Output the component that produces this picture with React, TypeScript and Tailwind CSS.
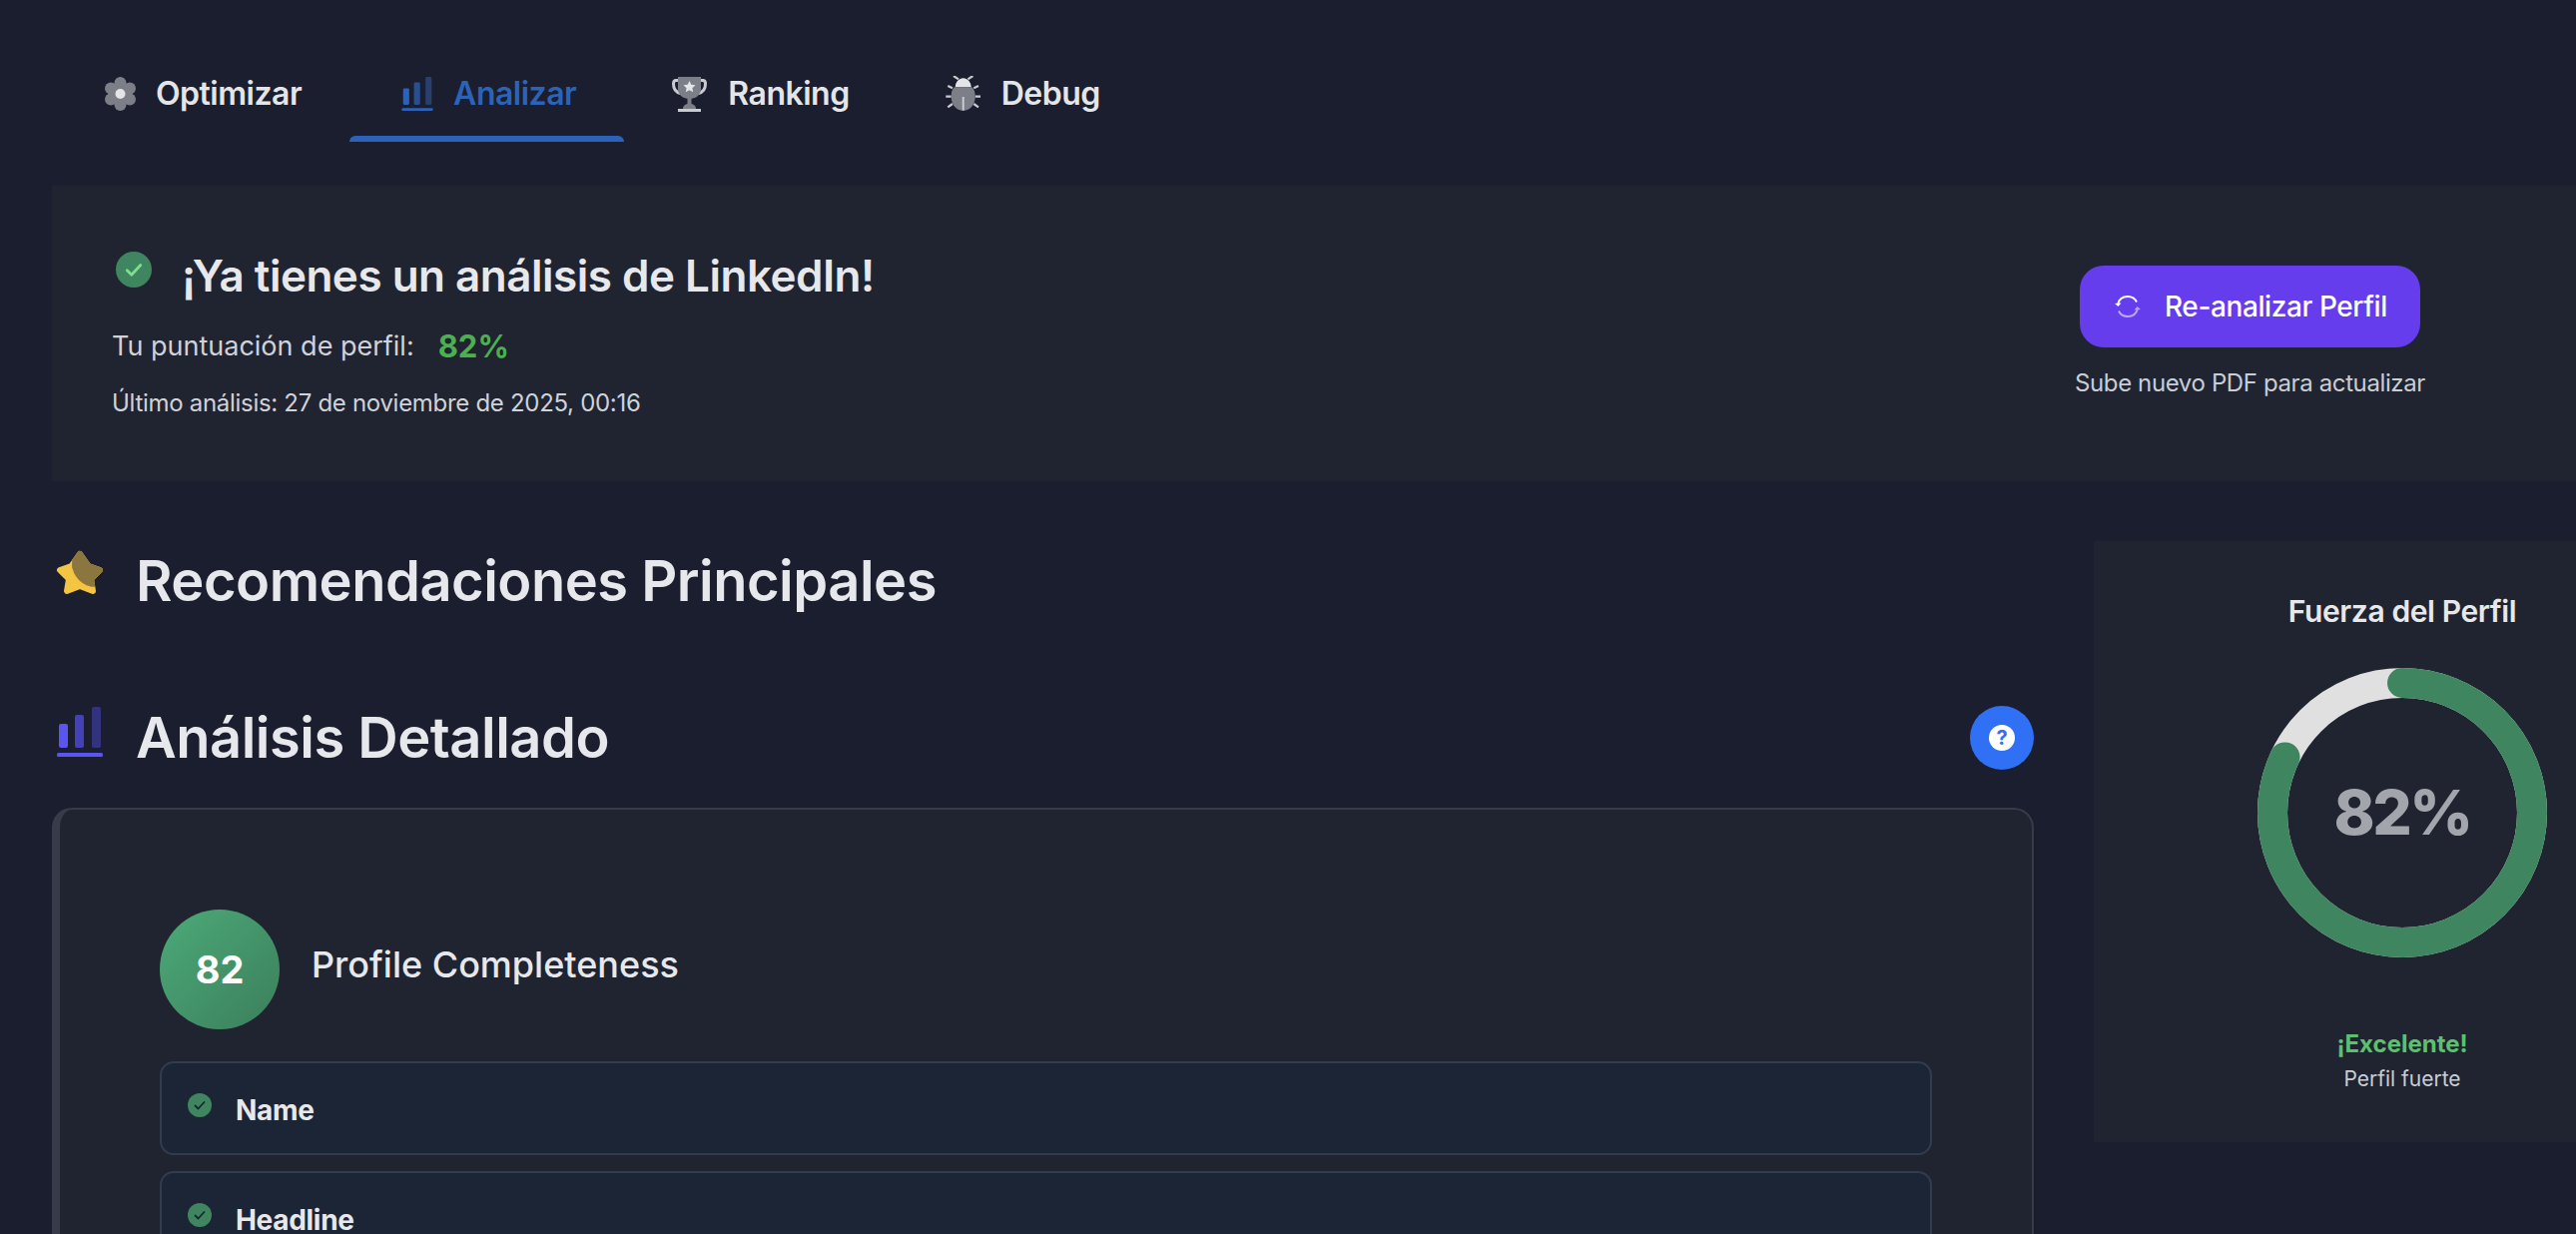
const GearIcon = () => (
  <svg width="36" height="36" viewBox="0 0 36 36">
    <g fill="#7d7f88">
      <circle cx="20.500" cy="18" r="12" />
      <circle cx="20.500" cy="7" r="6" />
      <circle cx="20.500" cy="29" r="6" />
      <circle cx="11" cy="12.500" r="6" />
      <circle cx="30" cy="12.500" r="6" />
      <circle cx="11" cy="23.500" r="6" />
      <circle cx="30" cy="23.500" r="6" />
    </g>
    <circle cx="20.500" cy="18" r="5" fill="#e4e5e9" />
  </svg>
);

const BarsIcon = ({ main, mid, dim }: { main: string; mid: string; dim: string }) => (
  <svg width="100%" height="100%" viewBox="0 0 46 50">
    <rect x="2" y="17" width="9" height="24" rx="2" fill={main} />
    <rect x="18" y="8" width="9" height="33" rx="2" fill={mid} />
    <rect x="35" y="0" width="9" height="41" rx="2" fill={dim} />
    <rect x="0" y="46" width="46" height="4" rx="1.500" fill={main} />
  </svg>
);

const TrophyIcon = () => (
  <svg width="36" height="36" viewBox="0 0 36 36">
    <path
      fill="none"
      stroke="#c9cbd1"
      strokeWidth="3"
      d="M6 4.500H4C2 4.500 1.500 6 1.500 8c0 5 3 8.500 7 9.500M29 4.500h2c2 0 2.500 1.500 2.500 3.500 0 5-3 8.500-7 9.500"
    />
    <path fill="#7d7f88" d="M6 1h23v12c0 6-5 10-11.500 10S6 19 6 13z" />
    <path fill="#e4e5e9" d="M17.500 5l1.800 3.800 4.200.5-3.100 2.900.8 4.100-3.700-2-3.700 2 .8-4.100-3.100-2.900 4.200-.5z" />
    <rect x="15.500" y="22" width="4" height="8" fill="#7d7f88" />
    <path fill="#7d7f88" d="M11 33c0-3 2-5 6.500-5s6.500 2 6.500 5z" />
    <rect x="6" y="33" width="23" height="3" fill="#c9cbd1" />
  </svg>
);

const BugIcon = () => (
  <svg width="36" height="36" viewBox="0 0 36 36">
    <path
      stroke="#c9cbd1"
      strokeWidth="2.200"
      fill="none"
      d="M13 3.300L8 0M22.400 3.300L27.400 0M2.300 10L7 12.300M33 10l-4.700 2.300M.3 20.700h5.400M35 20.700h-5.300M2.300 31.300L7 28M33 31.300L28.300 28"
    />
    <path fill="#e4e5e9" d="M9.700 11.300C10 6 13.500 2.300 17.700 2.300s7.700 3.700 8 9z" />
    <path fill="#7d7f88" d="M9 11.300h17.400c2 1.500 3.300 4.500 3.300 9.400 0 8-5 14-12 14s-12-6-12-14c0-4.900 1.300-7.900 3.300-9.400z" />
    <rect x="16.700" y="21" width="2" height="13.700" fill="#c9cbd1" />
  </svg>
);

const STAR_POINTS = "30,9 38.500,21 50,25 41,34 43,46 30,41 17,46 19,34 10,25 21.500,21";

const StarIcon = () => (
  <svg width="48" height="48" viewBox="6 5 48 48">
    <defs>
      <clipPath id="star-shade">
        <circle cx="46" cy="18" r="24" />
      </clipPath>
    </defs>
    <polygon points={STAR_POINTS} fill="#f4c542" stroke="#f4c542" strokeWidth="6" strokeLinejoin="round" />
    <g clipPath="url(#star-shade)">
      <polygon points={STAR_POINTS} fill="#8c7640" stroke="#8c7640" strokeWidth="6" strokeLinejoin="round" />
    </g>
  </svg>
);

const CheckBadge = ({ size, fill, tick }: { size: number; fill: string; tick: string }) => (
  <svg width={size} height={size} viewBox="0 0 24 24">
    <circle cx="12" cy="12" r="12" fill={fill} />
    <path d="M7.500 12.500l3 3 6-6.500" fill="none" stroke={tick} strokeWidth="1.800" strokeLinecap="round" strokeLinejoin="round" />
  </svg>
);

const RefreshIcon = () => (
  <svg width="26" height="26" viewBox="0 0 26 26" fill="none" strokeWidth="2">
    <path d="M3 11C4.200 6 8 3 13 3c4 0 7.400 2 9 5.500" stroke="#ffffff" />
    <path d="M23 15c-1.200 5-5 8-10 8-4 0-7.400-2-9-5.500" stroke="#b9a6f7" />
    <path d="M0 10l3.500 3L6.500 9.500z" fill="#ffffff" />
    <path d="M26 16l-3.500-3-3 3.500z" fill="#b9a6f7" />
  </svg>
);

const tabs = [
  { label: "Optimizar", icon: <GearIcon /> },
  {
    label: "Analizar",
    active: true,
    icon: (
      <span className="ml-[4px] block h-[34px] w-[32px]">
        <BarsIcon main="#2c63b8" mid="#2a4f8f" dim="#27406f" />
      </span>
    ),
  },
  { label: "Ranking", icon: <TrophyIcon /> },
  { label: "Debug", icon: <BugIcon /> },
];

const RING_RADIUS = 130;
const RING_LENGTH = 2 * Math.PI * RING_RADIUS;

const StrengthRing = ({ value }: { value: number }) => (
  <div className="relative mt-[37px] h-[290px] w-[290px]">
    <svg width="290" height="290" viewBox="0 0 290 290" className="-rotate-90">
      <circle cx="145" cy="145" r={RING_RADIUS} fill="none" stroke="#e0e0e0" strokeWidth="30" />
      <circle
        cx="145"
        cy="145"
        r={RING_RADIUS}
        fill="none"
        stroke="#3f8660"
        strokeWidth="30"
        strokeLinecap="round"
        strokeDasharray={`${(RING_LENGTH * value) / 100} ${RING_LENGTH}`}
      />
    </svg>
    <span className="absolute inset-0 flex items-center justify-center text-[62px] font-extrabold leading-none tracking-[-2.500px] text-[#a3a5ac]">
      {value}%
    </span>
  </div>
);

const CheckItem = ({ label }: { label: string }) => (
  <div className="flex h-[94px] items-start gap-[24px] rounded-[14px] border-2 border-[#323c4e] bg-[#1b2535] pl-[26px] pt-[30px]">
    <CheckBadge size={24} fill="#3f8660" tick="#1b2535" />
    <span className="text-[28px] font-bold leading-[34px] tracking-[-0.3px] text-[#e7e8ec]">{label}</span>
  </div>
);

export default function App() {
  return (
    <div className="h-[1236px] w-[2580px] overflow-hidden bg-[#1a1e2e] font-[Inter,sans-serif]">
      <nav className="flex pl-[52px] pt-[50px]">
        {tabs.map((tab) => (
          <div key={tab.label} className="flex flex-col">
            <div
              className={`flex h-[86px] items-center gap-[20px] px-[48px] pt-[2px] text-[32px] font-semibold tracking-[-0.5px] ${
                tab.active ? "text-[#2c63b8]" : "text-[#e4e5e9]"
              }`}
            >
              <span className="block w-[36px] shrink-0">{tab.icon}</span>
              <span>{tab.label}</span>
            </div>
            <div className={`h-[6px] rounded-t-[6px] ${tab.active ? "bg-[#2c63b8]" : ""}`} />
          </div>
        ))}
      </nav>

      <section className="ml-[52px] mt-[44px] flex h-[296px] items-center justify-between bg-[#1f2430] pl-[60px] pr-[151px]">
        <div className="flex flex-col">
          <div className="flex items-start gap-[30px] pl-[4px]">
            <span className="mt-[6px]">
              <CheckBadge size={36} fill="#3f8660" tick="#7ee08f" />
            </span>
            <h2 className="text-[44px] font-semibold leading-[60px] tracking-[-0.5px] text-[#e7e8ec]">
              ¡Ya tienes un análisis de LinkedIn!
            </h2>
          </div>
          <div className="mt-[19px] flex items-center gap-[24px]">
            <span className="text-[27px] leading-[44px] text-[#d0d2d9]">Tu puntuación de perfil:</span>
            <span className="text-[31px] font-bold leading-[44px] text-[#4caf50]">82%</span>
          </div>
          <p className="mt-[17px] text-[24px] leading-[36px] tracking-[-0.3px] text-[#d0d2d9]">
            Último análisis: 27 de noviembre de 2025, 00:16
          </p>
        </div>
        <div className="flex flex-col items-center">
          <button className="flex h-[82px] w-[341px] items-center gap-[24px] rounded-[24px] bg-[#653ded] pl-[35px] text-[28px] font-medium tracking-[-0.4px] text-white">
            <RefreshIcon />
            Re-analizar Perfil
          </button>
          <p className="mt-[18px] text-[24px] leading-[36px] tracking-[-0.38px] text-[#c9cdd6]">
            Sube nuevo PDF para actualizar
          </p>
        </div>
      </section>

      <main className="mt-[60px] flex gap-[60px] pl-[52px]">
        <div className="w-[1985px] shrink-0">
          <div className="flex h-[80px] items-start gap-[32px] pl-[4px]">
            <span className="mt-[9px] block">
              <StarIcon />
            </span>
            <h2 className="text-[56px] font-semibold leading-[80px] tracking-[-0.5px] text-[#e7e8ec]">
              Recomendaciones Principales
            </h2>
          </div>
          <div className="mt-[77px] flex h-[80px] items-center justify-between">
            <div className="flex items-start gap-[33px] pl-[5px]">
              <span className="mt-[9px] block h-[50px] w-[46px]">
                <BarsIcon main="#5a55f0" mid="#4440b8" dim="#33327c" />
              </span>
              <h2 className="text-[56px] font-semibold leading-[80px] tracking-[-0.5px] text-[#e7e8ec]">
                Análisis Detallado
              </h2>
            </div>
            <button className="flex h-[64px] w-[64px] items-center justify-center rounded-full bg-[#3070f5]">
              <span className="flex h-[26px] w-[26px] items-center justify-center rounded-full bg-white text-[20px] font-bold leading-none text-[#3070f5]">
                ?
              </span>
            </button>
          </div>
          <div className="mt-[30px] rounded-[20px] border-2 border-l-8 border-[#383c4a] bg-[#1f2430] p-[100px]">
            <div className="flex items-center gap-[32px]">
              <div className="flex h-[120px] w-[120px] items-center justify-center rounded-full bg-gradient-to-br from-[#4caa78] to-[#3b7f5c] text-[38px] font-bold text-white">
                82
              </div>
              <h3 className="pb-[10px] text-[36px] font-medium leading-[48px] text-[#e7e8ec]">Profile Completeness</h3>
            </div>
            <div className="mt-[32px] flex flex-col gap-[16px]">
              <CheckItem label="Name" />
              <CheckItem label="Headline" />
            </div>
          </div>
        </div>

        <aside className="flex h-[602px] w-[618px] shrink-0 flex-col items-center bg-[#1f2430] pt-[50px]">
          <h3 className="text-[30px] font-semibold leading-[40px] tracking-[-0.4px] text-[#e7e8ec]">Fuerza del Perfil</h3>
          <StrengthRing value={82} />
          <p className="mt-[71px] text-[24px] font-bold leading-[32px] text-[#5cc06f]">¡Excelente!</p>
          <p className="mt-[5px] text-[21px] leading-[28px] text-[#c9cdd6]">Perfil fuerte</p>
        </aside>
      </main>
    </div>
  );
}
